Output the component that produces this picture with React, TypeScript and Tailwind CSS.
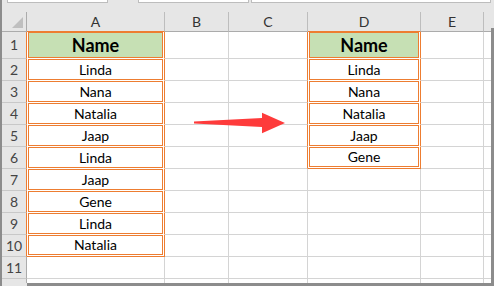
const colA = ["Name", "Linda", "Nana", "Natalia", "Jaap", "Linda", "Jaap", "Gene", "Linda", "Natalia"];
const colD = ["Name", "Linda", "Nana", "Natalia", "Jaap", "Gene"];

type RangeCellProps = {
  width: string;
  text?: string;
  head: boolean;
  last: boolean;
};

function RangeCell({ width, text, head, last }: RangeCellProps) {
  if (!text) {
    return <div className={`${width} shrink-0 bg-white border-r border-b border-r-[#d4d4d4] border-b-[#d4d4d4]`} />;
  }
  return (
    <div
      className={`${width} shrink-0 flex bg-white border-r border-b border-r-[#ed7d31] ${
        last ? "border-b-[#ed7d31]" : "border-b-white"
      }`}
    >
      <div
        className={`flex-1 mx-px ${last ? "mb-px" : ""} flex items-center justify-center border border-[#ed7d31] text-black ${
          head ? "bg-[#c6e0b4] text-[18px] font-bold" : "text-[14px]"
        }`}
      >
        {text}
      </div>
    </div>
  );
}

function SheetRow({ n }: { n: number }) {
  const a = colA[n - 1];
  const d = colD[n - 1];
  return (
    <div className={`flex ${n === 1 ? "h-[27px]" : "h-[22px]"}`}>
      <div
        className={`w-[25px] shrink-0 flex items-center justify-center border-r border-b border-b-[#c8c8c8] text-[14px] text-[#444] ${
          a ? "border-r-[#ed7d31]" : "border-r-[#ababab]"
        }`}
      >
        {n}
      </div>
      <RangeCell width="w-[138px]" text={a} head={n === 1} last={n === colA.length} />
      <div className="w-[64px] shrink-0 bg-white border-r border-b border-r-[#d4d4d4] border-b-[#d4d4d4]" />
      <div
        className={`w-[79px] shrink-0 bg-white border-r border-b border-b-[#d4d4d4] ${
          d ? "border-r-[#ed7d31]" : "border-r-[#d4d4d4]"
        }`}
      />
      <RangeCell width="w-[113px]" text={d} head={n === 1} last={n === colD.length} />
      <div className="w-[63px] shrink-0 bg-white border-r border-b border-r-[#d4d4d4] border-b-[#d4d4d4]" />
      <div className="flex-1 bg-white border-b border-b-[#d4d4d4]" />
    </div>
  );
}

function HeaderRow() {
  const cols = [
    { label: "A", w: "w-[138px]", range: true },
    { label: "B", w: "w-[64px]", range: false },
    { label: "C", w: "w-[79px]", range: false },
    { label: "D", w: "w-[113px]", range: true },
    { label: "E", w: "w-[63px]", range: false },
  ];
  return (
    <div className="flex h-[20px]">
      <div className="w-[25px] shrink-0 border-r border-b border-r-[#ababab] border-b-[#ababab]">
        <svg width="24" height="19" viewBox="0 0 24 19">
          <polygon points="21,5 21,16 10,16" fill="#bfbfbf" />
        </svg>
      </div>
      {cols.map((c) => (
        <div
          key={c.label}
          className={`${c.w} shrink-0 flex items-center justify-center border-r border-b border-r-[#bdbdbd] text-[14px] text-[#333] ${
            c.range ? "border-b-[#ed7d31]" : "border-b-[#ababab]"
          }`}
        >
          {c.label}
        </div>
      ))}
      <div className="flex-1 border-b border-b-[#ababab]" />
    </div>
  );
}

export default function App() {
  const rows = [1, 2, 3, 4, 5, 6, 7, 8, 9, 10, 11];
  return (
    <div className="relative w-[494px] h-[286px] overflow-hidden flex flex-col bg-[#e6e6e6] border-l-2 border-l-[#8c8c8c] font-['Lato',sans-serif] leading-none">
      <div className="flex flex-1 min-h-0">
        <div className="w-[489px] shrink-0 flex flex-col">
          <div className="h-[12px] flex items-start">
            <div className="ml-[5px] w-[101px] h-[3px] bg-white border border-t-0 border-[#bdbdbd]" />
            <div className="ml-[30px] w-[111px] h-[3px] bg-white border border-t-0 border-[#bdbdbd]" />
            <div className="ml-[2px] w-[240px] h-[3px] bg-white border border-t-0 border-[#bdbdbd]" />
          </div>
          <HeaderRow />
          {rows.map((n) => (
            <SheetRow key={n} n={n} />
          ))}
          <div className="flex flex-1">
            <div className="w-[25px] shrink-0 border-r border-r-[#ababab]" />
            <div className="w-[138px] shrink-0 bg-white border-r border-r-[#d4d4d4]" />
            <div className="w-[64px] shrink-0 bg-white border-r border-r-[#d4d4d4]" />
            <div className="w-[79px] shrink-0 bg-white border-r border-r-[#d4d4d4]" />
            <div className="w-[113px] shrink-0 bg-white border-r border-r-[#d4d4d4]" />
            <div className="w-[63px] shrink-0 bg-white border-r border-r-[#d4d4d4]" />
            <div className="flex-1 bg-white" />
          </div>
        </div>
        <div className="w-[3px] mt-[28px] bg-[#8c8c8c]" />
      </div>
      <div className="h-[3px] flex">
        <div className="w-[25px]" />
        <div className="flex-1 bg-[#8c8c8c]" />
      </div>
      <svg className="absolute left-0 top-0 pointer-events-none" width="494" height="286" viewBox="0 0 494 286">
        <polygon points="192,121.6 260,118 260,112.7 283,123 260,133.3 260,127 192,123.4" fill="#fe3b3b" />
      </svg>
    </div>
  );
}
